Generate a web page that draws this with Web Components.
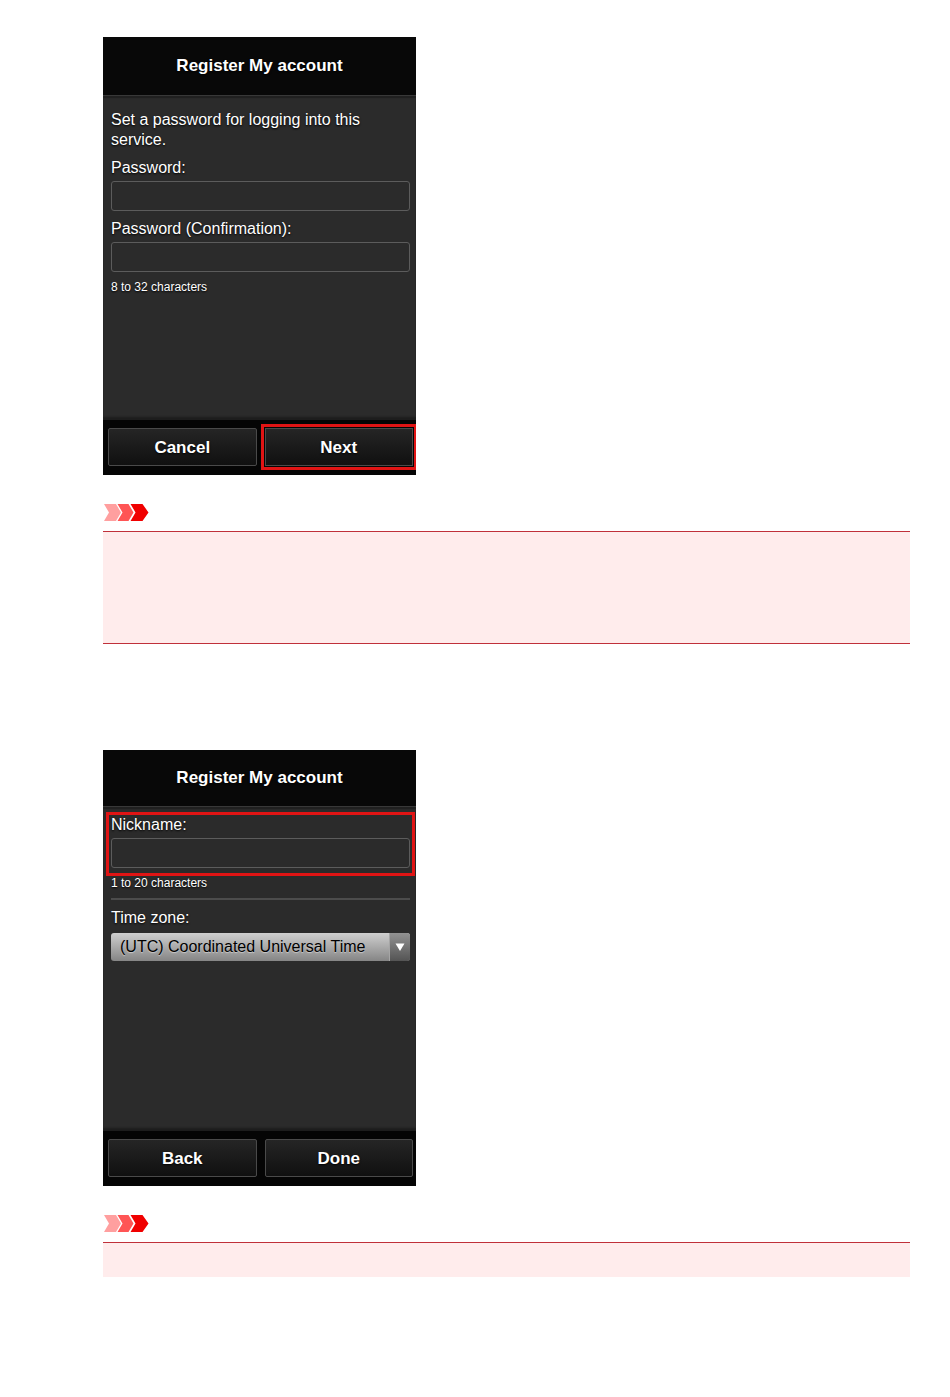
<!DOCTYPE html>
<html lang="en">
<head>
<meta charset="UTF-8">
<meta name="viewport" content="width=device-width, initial-scale=1">
<title>Register My account</title>
<style>
    body {
        margin: 0;
        padding: 37px 40px 121px 103px;
        background-color: #fff;
        font-family: "Liberation Sans", Arial, sans-serif;
    }

    .last {
        margin-top: 106px;
        --bar-height: 56px;
    }
</style>
</head>
<body>
    <main>
        <phone-screen heading="Register My account">
            <p>Set a password for logging into this service.</p>
            <text-field label="Password:" type="password"></text-field>
            <text-field label="Password (Confirmation):" type="password" hint="8 to 32 characters"></text-field>
            <bar-button slot="actions">Cancel</bar-button>
            <bar-button slot="actions" marked>Next</bar-button>
        </phone-screen>
        <important-note></important-note>

        <phone-screen class="last" heading="Register My account">
            <text-field label="Nickname:" type="text" hint="1 to 20 characters" marked></text-field>
            <hr>
            <select-field label="Time zone:" option="(UTC) Coordinated Universal Time"></select-field>
            <bar-button slot="actions">Back</bar-button>
            <bar-button slot="actions">Done</bar-button>
        </phone-screen>
        <important-note continued></important-note>
    </main>

<script>
class PhoneScreen extends HTMLElement {
    constructor(){
        super()
        this.attachShadow({mode : "open"})
    }

    connectedCallback() {
        this.shadowRoot.innerHTML = `
        <style>
            * {
                box-sizing: border-box;
            }

            :host {
                display: block;
                max-width: 313px;
                overflow: hidden;
                background-color: #2b2b2b;
                color: #fff;
                font-size: 16px;
                line-height: 20px;
                text-shadow: 0 1px 2px #000;
            }

            header {
                display: flex;
                align-items: center;
                justify-content: center;
                height: var(--bar-height, 58px);
                background-color: #080808;
            }

            h1 {
                margin: 0;
                font-size: 17px;
                line-height: 20px;
            }

            .content {
                min-height: 325px;
                padding: 0 6px 0 8px;
                border-top: 1px solid #383838;
                box-shadow: inset 0 2px 1px #202020, inset 0 -4px 2px -1px #1d1d1d;
            }

            footer {
                display: grid;
                grid-template-columns: 1fr 1fr;
                gap: 8px;
                padding: 8px 3px 9px 5px;
                background-color: #050505;
            }

            ::slotted(p) {
                margin: 0;
                padding-top: 14px;
            }

            ::slotted(hr) {
                height: 2px;
                margin: 8px 0;
                border: none;
                background-color: #4c4c4c;
            }
        </style>

        <header><h1>${this.getAttribute("heading")}</h1></header>
        <div class="content"><slot></slot></div>
        <footer><slot name="actions"></slot></footer>
        `
    }
}

class TextField extends HTMLElement {
    constructor(){
        super()
        this.attachShadow({mode : "open"})
    }

    connectedCallback() {
        const hint = this.getAttribute("hint")

        this.shadowRoot.innerHTML = `
        <style>
            * {
                box-sizing: border-box;
            }

            :host {
                display: block;
                padding-top: 8px;
            }

            label {
                display: block;
            }

            input {
                display: block;
                width: 100%;
                height: 30px;
                margin-top: 3px;
                padding: 0 8px;
                border: 1px solid #5c5c5c;
                border-radius: 3px;
                background-color: #2b2b2b;
                color: #fff;
                font: inherit;
            }

            small {
                display: block;
                margin-top: 8px;
                font-size: 12px;
                line-height: 14px;
            }

            :host([marked]) {
                padding-top: 5px;
            }

            :host([marked]) .field {
                margin: 0 -5px;
                padding: 0 2px 5px;
                border: 3px solid #e01414;
            }

            :host([marked]) small {
                margin-top: 0;
            }
        </style>

        <div class="field">
            <label for="box">${this.getAttribute("label")}</label>
            <input id="box" type="${this.getAttribute("type")}">
        </div>
        ${hint ? `<small>${hint}</small>` : ""}
        `
    }
}

class SelectField extends HTMLElement {
    constructor(){
        super()
        this.attachShadow({mode : "open"})
    }

    connectedCallback() {
        this.shadowRoot.innerHTML = `
        <style>
            * {
                box-sizing: border-box;
            }

            :host {
                display: block;
            }

            label {
                display: block;
            }

            .picker {
                display: grid;
                margin-top: 5px;
                border-radius: 3px;
                overflow: hidden;
            }

            select, .arrow {
                grid-area: 1 / 1;
                height: 28px;
            }

            select {
                appearance: none;
                width: 100%;
                padding: 0 24px 0 9px;
                border: none;
                background: linear-gradient(#cfcfcf, #858585);
                color: #000;
                font: inherit;
                text-shadow: 0 1px 1px #ccc;
            }

            .arrow {
                display: flex;
                align-items: center;
                justify-content: center;
                justify-self: end;
                width: 21px;
                border-left: 1px solid #a5a5a5;
                background: linear-gradient(#929292, #545454);
                pointer-events: none;
            }
        </style>

        <label for="list">${this.getAttribute("label")}</label>
        <div class="picker">
            <select id="list">
                <option>${this.getAttribute("option")}</option>
            </select>
            <span class="arrow">
                <svg width="10" height="8" viewBox="0 0 10 8" aria-hidden="true">
                    <path d="M0.5 0.5h9L5 8z" fill="#fff"/>
                </svg>
            </span>
        </div>
        `
    }
}

class BarButton extends HTMLElement {
    constructor(){
        super()
        this.attachShadow({mode : "open"})
    }

    connectedCallback() {
        this.shadowRoot.innerHTML = `
        <style>
            :host {
                display: block;
            }

            button {
                display: block;
                width: 100%;
                height: 38px;
                padding: 2px 0 0;
                border: 1px solid #4a4a4a;
                border-radius: 2px;
                background: linear-gradient(#252525, #101010);
                color: #fff;
                font: bold 17px/20px "Liberation Sans", Arial, sans-serif;
                text-shadow: inherit;
                cursor: pointer;
            }

            :host([marked]) button {
                border-radius: 0;
                outline: 3px solid #e01414;
                outline-offset: 1px;
            }
        </style>

        <button type="button"><slot></slot></button>
        `
    }
}

class ImportantNote extends HTMLElement {
    constructor(){
        super()
        this.attachShadow({mode : "open"})
    }

    connectedCallback() {
        this.shadowRoot.innerHTML = `
        <style>
            * {
                box-sizing: border-box;
            }

            :host {
                display: block;
                padding-top: 29px;
            }

            svg {
                display: block;
            }

            .note {
                min-height: 113px;
                margin-top: 9px;
                border-top: 1px solid #c0303a;
                border-bottom: 1px solid #c0303a;
                background-color: #ffecec;
            }

            /* the box goes on over the page break */
            :host([continued]) .note {
                min-height: 35px;
                border-bottom: none;
            }
        </style>

        <svg width="46" height="18" viewBox="0 0 46 18" role="img" aria-label="Important">
            <path d="M1 0h12l5 8.5l-5 8.5h-12l5-8.5z" fill="#ff9f9f"/>
            <path d="M14.5 0h11l5 8.5l-5 8.5h-11l5-8.5z" fill="#ff5555"/>
            <path d="M27.5 0h12l6 8.5l-6 8.5h-12l5-8.5z" fill="#f00000"/>
        </svg>
        <div class="note"><slot></slot></div>
        `
    }
}

customElements.define("phone-screen" , PhoneScreen)
customElements.define("text-field" , TextField)
customElements.define("select-field" , SelectField)
customElements.define("bar-button" , BarButton)
customElements.define("important-note" , ImportantNote)
</script>
</body>
</html>
